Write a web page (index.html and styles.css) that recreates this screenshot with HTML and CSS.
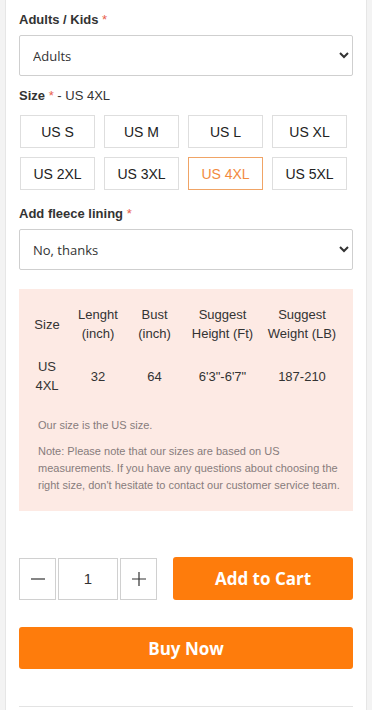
FILE: index.html
```html
<!DOCTYPE html>
<html lang="en">
  <head>
    <meta charset="UTF-8" />
    <meta name="viewport" content="width=device-width, initial-scale=1.0" />
    <title>product options</title>
    <link rel="stylesheet" href="styles.css">
  </head>
  <body>
    <div class="panel">
      <div class="field">
        <label class="field-label">Adults / Kids <span class="req">*</span></label>
        <select class="picker">
          <option>Adults</option>
          <option>Kids</option>
        </select>
      </div>

      <div class="field field-sizes">
        <label class="field-label">Size <span class="req">*</span> <span class="picked">- US 4XL</span></label>
        <div class="sizes">
          <button class="size">US S</button>
          <button class="size">US M</button>
          <button class="size">US L</button>
          <button class="size">US XL</button>
          <button class="size">US 2XL</button>
          <button class="size">US 3XL</button>
          <button class="size active">US 4XL</button>
          <button class="size">US 5XL</button>
        </div>
      </div>

      <div class="field">
        <label class="field-label">Add fleece lining <span class="req">*</span></label>
        <select class="picker">
          <option>No, thanks</option>
          <option>Yes</option>
        </select>
      </div>

      <div class="size-chart">
        <table>
          <colgroup>
            <col class="c-size">
            <col class="c-len">
            <col class="c-bust">
            <col class="c-height">
            <col class="c-weight">
          </colgroup>
          <tr>
            <th>Size</th>
            <th>Lenght<br>(inch)</th>
            <th>Bust<br>(inch)</th>
            <th>Suggest<br>Height (Ft)</th>
            <th>Suggest<br>Weight (LB)</th>
          </tr>
          <tr>
            <td>US<br>4XL</td>
            <td>32</td>
            <td>64</td>
            <td>6'3"-6'7"</td>
            <td>187-210</td>
          </tr>
        </table>
        <p class="note">Our size is the US size.</p>
        <p class="note">Note: Please note that our sizes are based on US measurements. If you have any questions about choosing the right size, don't hesitate to contact our customer service team.</p>
      </div>

      <div class="buy-row">
        <div class="qty">
          <button class="qty-btn">
            <svg width="16" height="16" viewBox="0 0 16 16"><path d="M1 8h14" stroke="#333" stroke-width="1.2"/></svg>
          </button>
          <input class="qty-input" type="text" value="1">
          <button class="qty-btn">
            <svg width="16" height="16" viewBox="0 0 16 16"><path d="M1 8h14M8 1v14" stroke="#333" stroke-width="1.2"/></svg>
          </button>
        </div>
        <button class="cart-btn">Add to Cart</button>
      </div>
      <button class="buy-btn">Buy Now</button>
      <div class="divider"></div>
    </div>
  </body>
</html>
```

FILE: styles.css
```css
* {
  margin: 0;
  padding: 0;
  box-sizing: border-box;
}
body {
  background-color: #f3f3f3;
  font-family: "Liberation Sans", Arial, sans-serif;
  color: #333;
}
.panel {
  margin: 0 5px;
  min-height: 710px;
  background-color: white;
  border-left: 1px solid #e6e6e6;
  border-right: 1px solid #e6e6e6;
  padding: 10px 13px 0;
}
.field {
  margin-bottom: 10px;
}
.field-sizes {
  margin-bottom: 14px;
}
.field-label {
  display: block;
  font-size: 13px;
  font-weight: bold;
  line-height: 20px;
  margin-bottom: 5px;
}
.req {
  color: #e8604c;
  font-weight: normal;
}
.picked {
  font-weight: normal;
}
.picker {
  width: 100%;
  height: 41px;
  border: 1px solid #cfcfcf;
  border-radius: 2px;
  background-color: white;
  font-family: "Open Sans", sans-serif;
  font-size: 13px;
  color: #333;
  padding-left: 9px;
}
.sizes {
  display: grid;
  grid-template-columns: repeat(4, 75px);
  column-gap: 9px;
  row-gap: 9px;
  padding-left: 1px;
  margin-top: 9px;
}
.size {
  height: 33px;
  border: 1px solid #dedede;
  background-color: white;
  font-family: "Liberation Sans", Arial, sans-serif;
  font-size: 14px;
  color: #222;
  cursor: pointer;
}
.size.active {
  border-color: #f0a466;
  color: #f28a3e;
}
.size-chart {
  background-color: #fdeae4;
  margin-top: 19px;
  padding: 14px 9px 17px 3px;
}
.size-chart table {
  width: 100%;
  table-layout: fixed;
  border-collapse: collapse;
  font-size: 13px;
  color: #333;
}
.c-size { width: 50px; }
.c-len { width: 52px; }
.c-bust { width: 61px; }
.c-height { width: 75px; }
.c-weight { width: 84px; }
.size-chart th {
  font-weight: normal;
  line-height: 19px;
  padding: 2px 0 14px;
}
.size-chart td {
  text-align: center;
  line-height: 19px;
}
.note {
  font-size: 11px;
  line-height: 17px;
  color: #877c7c;
  margin-left: 16px;
}
.size-chart table + .note {
  margin-top: 22px;
  margin-bottom: 9px;
}
.buy-row {
  display: flex;
  align-items: center;
  margin-top: 46px;
  gap: 16px;
}
.qty {
  display: flex;
  gap: 2px;
}
.qty-btn {
  width: 37px;
  height: 42px;
  border: 1px solid #d0d0d0;
  background-color: white;
  display: flex;
  align-items: center;
  justify-content: center;
}
.qty-input {
  width: 60px;
  height: 42px;
  border: 1px solid #d0d0d0;
  text-align: center;
  font-family: "Liberation Sans", Arial, sans-serif;
  font-size: 15px;
  color: #333;
}
.cart-btn,
.buy-btn {
  background-color: #fe7c0c;
  color: white;
  border: none;
  border-radius: 3px;
  font-family: "Open Sans", sans-serif;
  font-weight: bold;
  font-size: 17px;
  cursor: pointer;
}
.cart-btn {
  flex: 1;
  height: 43px;
}
.buy-btn {
  display: block;
  width: 100%;
  height: 42px;
  margin-top: 27px;
}
.buy-btn:hover,
.cart-btn:hover {
  background-color: #e86c00;
}
.divider {
  margin-top: 37px;
  border-top: 1px solid #e3e3e3;
}
```
